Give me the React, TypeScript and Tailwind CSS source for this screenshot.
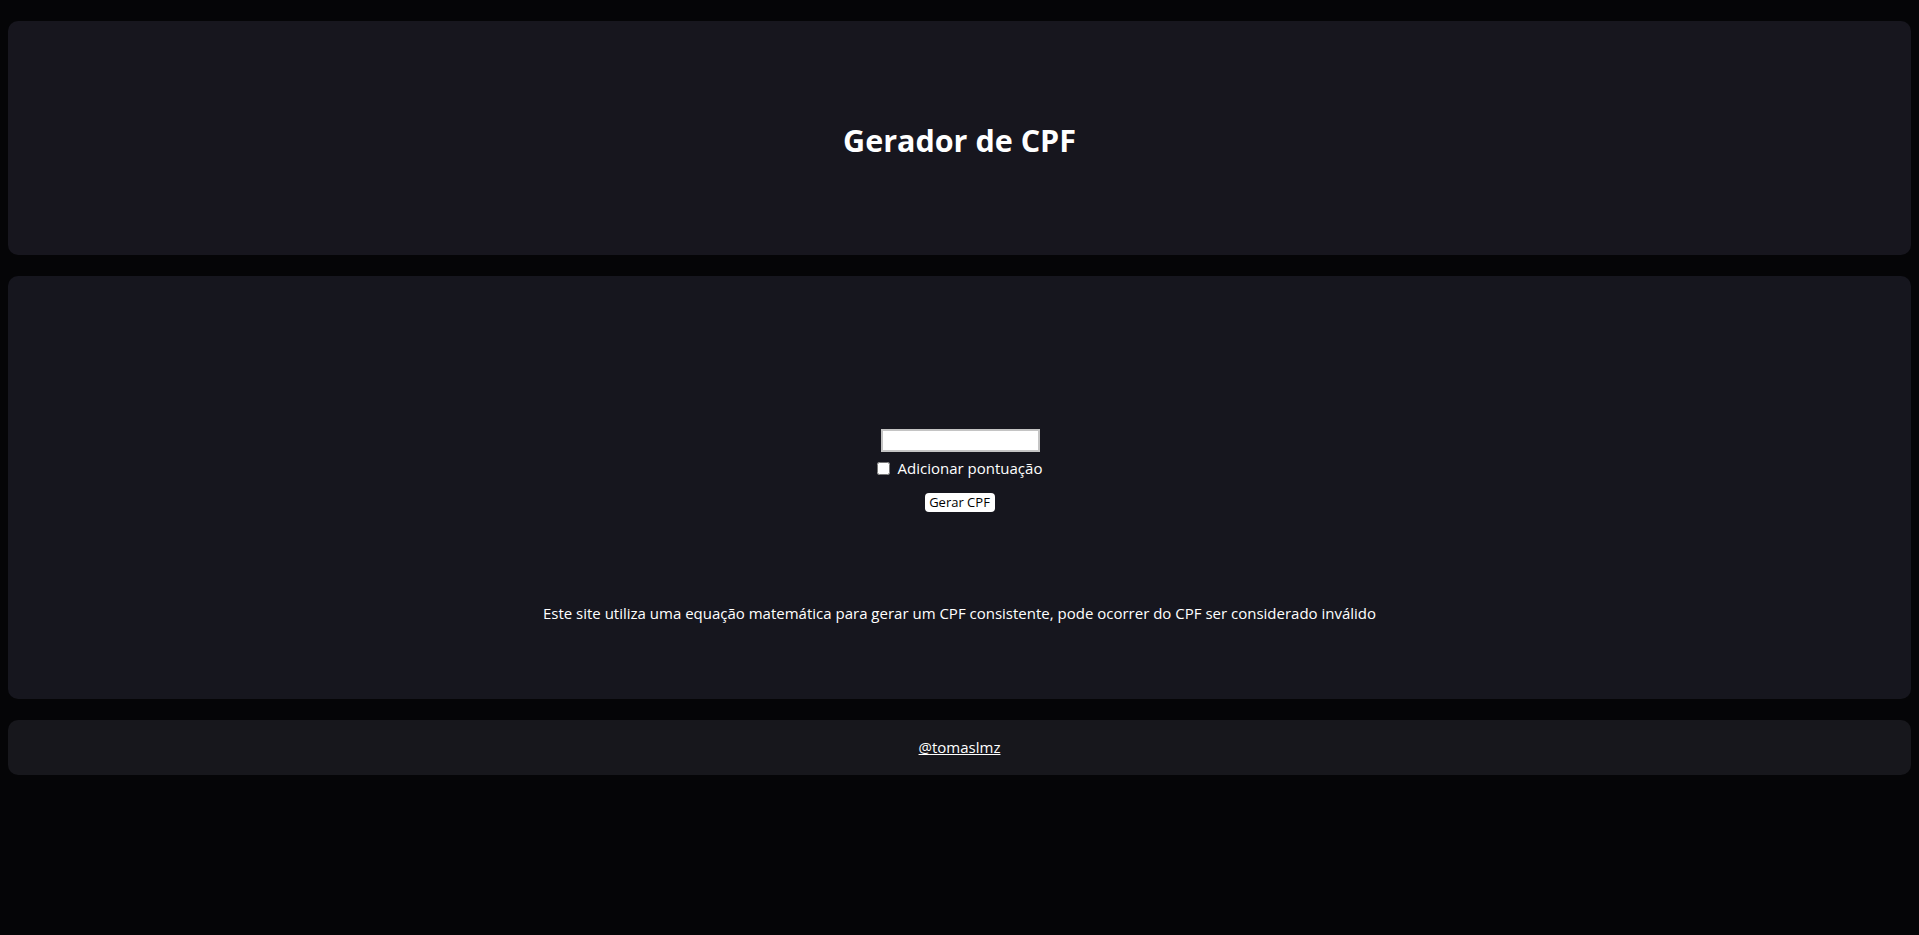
import { useState } from 'react';

function gerarCpf(pontuacao: boolean) {
  const n = Array.from({ length: 9 }, () => Math.floor(Math.random() * 10));
  const dv = (arr: number[]) => {
    const s = arr.reduce((acc, d, i) => acc + d * (arr.length + 1 - i), 0);
    const r = (s * 10) % 11;
    return r === 10 ? 0 : r;
  };
  const d1 = dv(n);
  const d2 = dv([...n, d1]);
  const s = [...n, d1, d2].join('');
  return pontuacao ? `${s.slice(0, 3)}.${s.slice(3, 6)}.${s.slice(6, 9)}-${s.slice(9)}` : s;
}

export default function App() {
  const [cpf, setCpf] = useState('');
  const [pontuacao, setPontuacao] = useState(false);

  return (
    <div
      className="min-h-[935px] bg-[#050507] px-2 pt-[21px] flex flex-col gap-[21px] text-white"
      style={{ fontFamily: '"Open Sans", "Noto Sans", sans-serif' }}
    >
      {/* Header */}
      <header className="h-[234px] rounded-[10px] bg-[#17161e] flex items-center justify-center pt-[5px]">
        <h1 className="text-[30.5px] font-bold leading-none">Gerador de CPF</h1>
      </header>

      {/* Gerador */}
      <main className="h-[423px] rounded-[10px] bg-[#16161e] flex flex-col items-center pt-[153px]">
        <input
          type="text"
          value={cpf}
          readOnly
          className="w-[159px] h-[23px] ml-[2px] bg-white border-2 border-[#c4c4c4] text-black text-[13px] px-[2px]"
        />
        <label className="flex items-center gap-[8px] mt-[6px] text-[15px] leading-[20px]">
          <input
            type="checkbox"
            checked={pontuacao}
            onChange={(e) => setPontuacao(e.target.checked)}
            className="w-[13px] h-[13px] m-0"
          />
          Adicionar pontuação
        </label>
        <button
          onClick={() => setCpf(gerarCpf(pontuacao))}
          className="mt-[15px] w-[70px] h-[19px] bg-white text-black text-[13px] leading-none rounded-[4px]"
        >
          Gerar CPF
        </button>
        <p className="mt-[90px] text-[15px]">
          Este site utiliza uma equação matemática para gerar um CPF consistente, pode ocorrer do CPF ser considerado inválido
        </p>
      </main>

      {/* Rodapé */}
      <footer className="h-[55px] rounded-[10px] bg-[#17171c] flex items-center justify-center">
        <a href="#" className="underline text-[15px]">@tomaslmz</a>
      </footer>
    </div>
  );
}
